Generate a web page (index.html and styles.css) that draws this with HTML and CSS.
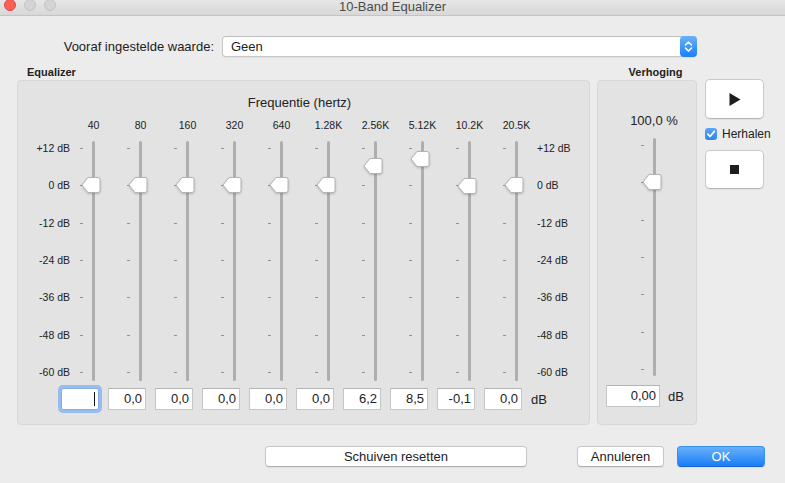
FILE: index.html
```html
<!DOCTYPE html>
<html lang="nl">
<head>
    <meta charset="UTF-8">
    <title>10-Band Equalizer</title>
    <link rel="stylesheet" href="styles.css">
</head>
<body>
    <svg class="defs" width="0" height="0">
        <symbol id="thumb" viewBox="0 0 20 18">
            <path d="M1 9 L7 1.5 H17 A2 2 0 0 1 19 3.5 V14.5 A2 2 0 0 1 17 16.5 H7 Z" fill="#fff" stroke="#b3b3b3" stroke-width="1"/>
        </symbol>
    </svg>

    <div class="titlebar">
        <div class="lights">
            <span class="light close"></span>
            <span class="light"></span>
            <span class="light"></span>
        </div>
        <span class="title">10-Band Equalizer</span>
    </div>

    <div class="preset">
        <label class="preset-label">Vooraf ingestelde waarde:</label>
        <div class="select">
            <span>Geen</span>
            <span class="stepper">
                <svg width="17" height="21" viewBox="0 0 17 21">
                    <path d="M5.5 9 L8.5 6 L11.5 9 M5.5 12 L8.5 15 L11.5 12" fill="none" stroke="#fff" stroke-width="1.5" stroke-linecap="round" stroke-linejoin="round"/>
                </svg>
            </span>
        </div>
    </div>

    <div class="groups">
        <div class="group eq-group">
            <div class="group-label">Equalizer</div>
            <div class="panel">
                <div class="eq-title">Frequentie (hertz)</div>
                <div class="eq-grid">
                    <span></span>
                    <span class="freq">40</span>
                    <span class="freq">80</span>
                    <span class="freq">160</span>
                    <span class="freq">320</span>
                    <span class="freq">640</span>
                    <span class="freq">1.28K</span>
                    <span class="freq">2.56K</span>
                    <span class="freq">5.12K</span>
                    <span class="freq">10.2K</span>
                    <span class="freq">20.5K</span>
                    <span></span>

                    <div class="scale left">
                        <span>+12 dB</span><span>0 dB</span><span>-12 dB</span><span>-24 dB</span><span>-36 dB</span><span>-48 dB</span><span>-60 dB</span>
                    </div>
                    <div class="slider">
                        <div class="ticks"><i></i><i></i><i></i><i></i><i></i><i></i><i></i></div>
                        <div class="track"></div>
                        <svg class="thumb" style="top: 35px"><use href="#thumb"/></svg>
                    </div>
                    <div class="slider">
                        <div class="ticks"><i></i><i></i><i></i><i></i><i></i><i></i><i></i></div>
                        <div class="track"></div>
                        <svg class="thumb" style="top: 35px"><use href="#thumb"/></svg>
                    </div>
                    <div class="slider">
                        <div class="ticks"><i></i><i></i><i></i><i></i><i></i><i></i><i></i></div>
                        <div class="track"></div>
                        <svg class="thumb" style="top: 35px"><use href="#thumb"/></svg>
                    </div>
                    <div class="slider">
                        <div class="ticks"><i></i><i></i><i></i><i></i><i></i><i></i><i></i></div>
                        <div class="track"></div>
                        <svg class="thumb" style="top: 35px"><use href="#thumb"/></svg>
                    </div>
                    <div class="slider">
                        <div class="ticks"><i></i><i></i><i></i><i></i><i></i><i></i><i></i></div>
                        <div class="track"></div>
                        <svg class="thumb" style="top: 35px"><use href="#thumb"/></svg>
                    </div>
                    <div class="slider">
                        <div class="ticks"><i></i><i></i><i></i><i></i><i></i><i></i><i></i></div>
                        <div class="track"></div>
                        <svg class="thumb" style="top: 35px"><use href="#thumb"/></svg>
                    </div>
                    <div class="slider">
                        <div class="ticks"><i></i><i></i><i></i><i></i><i></i><i></i><i></i></div>
                        <div class="track"></div>
                        <svg class="thumb" style="top: 16px"><use href="#thumb"/></svg>
                    </div>
                    <div class="slider">
                        <div class="ticks"><i></i><i></i><i></i><i></i><i></i><i></i><i></i></div>
                        <div class="track"></div>
                        <svg class="thumb" style="top: 9px"><use href="#thumb"/></svg>
                    </div>
                    <div class="slider">
                        <div class="ticks"><i></i><i></i><i></i><i></i><i></i><i></i><i></i></div>
                        <div class="track"></div>
                        <svg class="thumb" style="top: 36px"><use href="#thumb"/></svg>
                    </div>
                    <div class="slider">
                        <div class="ticks"><i></i><i></i><i></i><i></i><i></i><i></i><i></i></div>
                        <div class="track"></div>
                        <svg class="thumb" style="top: 35px"><use href="#thumb"/></svg>
                    </div>
                    <div class="scale right">
                        <span>+12 dB</span><span>0 dB</span><span>-12 dB</span><span>-24 dB</span><span>-36 dB</span><span>-48 dB</span><span>-60 dB</span>
                    </div>
                </div>

                <div class="fields">
                    <div class="field focused"><span class="caret"></span></div>
                    <div class="field">0,0</div>
                    <div class="field">0,0</div>
                    <div class="field">0,0</div>
                    <div class="field">0,0</div>
                    <div class="field">0,0</div>
                    <div class="field">6,2</div>
                    <div class="field">8,5</div>
                    <div class="field">-0,1</div>
                    <div class="field">0,0</div>
                    <span class="unit">dB</span>
                </div>
            </div>
        </div>

        <div class="group boost-group">
            <div class="group-label">Verhoging</div>
            <div class="panel">
                <div class="boost-value">100,0 %</div>
                <div class="slider boost-slider">
                    <div class="ticks"><i></i><i></i><i></i><i></i><i></i><i></i><i></i></div>
                    <div class="track"></div>
                    <svg class="thumb" style="top: 35px"><use href="#thumb"/></svg>
                </div>
                <div class="fields boost-fields">
                    <div class="field wide">0,00</div>
                    <span class="unit">dB</span>
                </div>
            </div>
        </div>

        <div class="side">
            <button class="big-btn" type="button">
                <svg width="12" height="13" viewBox="0 0 12 13"><path d="M0.5 0 L11.5 6.5 L0.5 13 Z" fill="#1e1e1e"/></svg>
            </button>
            <label class="check">
                <span class="box">
                    <svg width="12" height="12" viewBox="0 0 12 12"><path d="M2.8 6.2 L5 8.5 L9.3 3.4" fill="none" stroke="#fff" stroke-width="1.7" stroke-linecap="round" stroke-linejoin="round"/></svg>
                </span>
                Herhalen
            </label>
            <button class="big-btn stop" type="button">
                <span class="square"></span>
            </button>
        </div>
    </div>

    <div class="footer">
        <button class="btn reset" type="button">Schuiven resetten</button>
        <button class="btn cancel" type="button">Annuleren</button>
        <button class="btn ok" type="button">OK</button>
    </div>
</body>
</html>
```

FILE: styles.css
```css
* {
    box-sizing: border-box;
}
body {
    margin: 0;
    width: 785px;
    height: 483px;
    overflow: hidden;
    background: #ececec;
    font-family: "Liberation Sans", Arial, sans-serif;
    color: #222;
}
.defs {
    position: absolute;
}
.titlebar {
    position: relative;
    height: 16px;
    border-bottom: 1px solid #c4c4c4;
    background: linear-gradient(#e6e6e6, #d8d8d8);
    text-align: center;
    font-size: 13px;
    line-height: 13px;
    color: #4b4b4b;
}
.lights {
    position: absolute;
    left: 4px;
    top: -1px;
    display: flex;
    gap: 8px;
}
.light {
    width: 12px;
    height: 12px;
    border-radius: 50%;
    background: #d4d4d4;
    border: 1px solid #c3c3c3;
}
.light.close {
    background: #fc5f57;
    border-color: #e2463f;
}
.preset {
    display: flex;
    align-items: center;
    height: 21px;
    margin-top: 20px;
    font-size: 13px;
}
.preset-label {
    width: 214px;
    text-align: right;
    margin-right: 8px;
}
.select {
    display: flex;
    align-items: center;
    width: 475px;
    height: 21px;
    padding-left: 8px;
    background: #fff;
    border: 1px solid #c8c8c8;
    border-top-color: #bdbdbd;
    border-radius: 4px;
    box-shadow: 0 1px 1px rgba(0, 0, 0, 0.05);
}
.stepper {
    display: flex;
    margin: -1px -1px -1px auto;
    width: 17px;
    height: 21px;
    border-radius: 4px;
    background: linear-gradient(#69b1fb, #1b7ff7);
}
.groups {
    display: flex;
    margin-top: 8px;
    padding-left: 17px;
}
.group-label {
    height: 15px;
    font-size: 11px;
    font-weight: bold;
    line-height: 14px;
}
.eq-group {
    width: 573px;
}
.eq-group .group-label {
    padding-left: 10px;
}
.boost-group {
    width: 100px;
    margin-left: 7px;
}
.boost-group .group-label {
    text-align: center;
    padding-left: 17px;
}
.panel {
    height: 345px;
    background: #e3e3e3;
    border: 1px solid #d7d7d7;
    border-radius: 4px;
}
.eq-title {
    padding-top: 14px;
    padding-right: 8px;
    font-size: 13px;
    line-height: 16px;
    text-align: center;
}
.eq-grid {
    display: grid;
    grid-template-columns: 52px repeat(10, 47px) 45px;
    grid-template-rows: 12px 240px;
    row-gap: 10px;
    margin-top: 8px;
}
.freq {
    font-size: 10.5px;
    line-height: 12px;
    text-align: center;
}
.scale {
    display: flex;
    flex-direction: column;
    justify-content: space-between;
    padding-bottom: 2px;
    font-size: 10.5px;
    line-height: 14px;
}
.scale.left {
    text-align: right;
}
.scale.right {
    margin-left: -3px;
}
.slider {
    position: relative;
    display: flex;
}
.ticks {
    display: flex;
    flex-direction: column;
    justify-content: space-between;
    width: 3px;
    margin-left: 10px;
    padding: 7px 0 8px;
}
.ticks i {
    display: block;
    height: 1px;
    background: #929292;
}
.track {
    width: 3px;
    margin-left: 9px;
    background: #aeaeae;
    border-radius: 2px;
}
.thumb {
    position: absolute;
    left: 11px;
    width: 20px;
    height: 18px;
    filter: drop-shadow(0 1px 1px rgba(0, 0, 0, 0.2));
}
.fields {
    display: flex;
    align-items: center;
    gap: 9px;
    margin-top: 7px;
    padding-left: 43px;
}
.field {
    width: 38px;
    height: 22px;
    padding-right: 3px;
    background: #fff;
    border: 1px solid #c6c6c6;
    border-top-color: #b3b3b3;
    font-size: 13px;
    line-height: 20px;
    text-align: right;
}
.field.focused {
    border-color: #86ade6;
    border-radius: 2px;
    box-shadow: 0 0 0 3px #97bdf0;
}
.caret {
    display: inline-block;
    width: 1px;
    height: 14px;
    margin-top: 3px;
    vertical-align: top;
    background: #111;
}
.unit {
    font-size: 13px;
}
.boost-value {
    padding-top: 32px;
    padding-left: 14px;
    font-size: 13px;
    line-height: 16px;
    text-align: center;
}
.boost-slider {
    width: 47px;
    height: 238px;
    margin-top: 9px;
    margin-left: 33px;
}
.boost-slider .ticks {
    padding-bottom: 6px;
}
.boost-fields {
    gap: 8px;
    margin-top: 9px;
    padding-left: 8px;
}
.field.wide {
    width: 54px;
}
.side {
    display: flex;
    flex-direction: column;
    margin-left: 8px;
    padding-top: 14px;
}
.big-btn {
    display: flex;
    align-items: center;
    justify-content: center;
    width: 59px;
    height: 40px;
    padding: 0 0 0 1px;
    background: #fff;
    border: 1px solid #c9c9c9;
    border-bottom-color: #b5b5b5;
    border-radius: 5px;
    box-shadow: 0 1px 1px rgba(0, 0, 0, 0.06);
}
.big-btn.stop {
    height: 39px;
    margin-top: 10px;
    padding: 0;
}
.square {
    width: 9px;
    height: 9px;
    background: #1e1e1e;
}
.check {
    display: flex;
    align-items: center;
    gap: 5px;
    height: 12px;
    margin-top: 9px;
    font-size: 12px;
    white-space: nowrap;
}
.box {
    display: flex;
    width: 12px;
    height: 12px;
    border-radius: 3px;
    background: linear-gradient(#5aa6fa, #2a84f4);
}
.footer {
    display: flex;
    margin-top: 21px;
}
.btn {
    height: 21px;
    padding: 0;
    font-family: inherit;
    font-size: 13px;
    color: #222;
    background: #fff;
    border: 1px solid #c7c7c7;
    border-bottom-color: #afafaf;
    border-radius: 4px;
    box-shadow: 0 1px 1px rgba(0, 0, 0, 0.05);
}
.reset {
    width: 262px;
    margin-left: 265px;
}
.cancel {
    width: 87px;
    margin-left: 50px;
}
.ok {
    width: 88px;
    margin-left: 13px;
    color: #fff;
    background: linear-gradient(#68b0fb, #1a7ef6);
    border-color: #3a8ff2;
    border-bottom-color: #1566d4;
}
```
